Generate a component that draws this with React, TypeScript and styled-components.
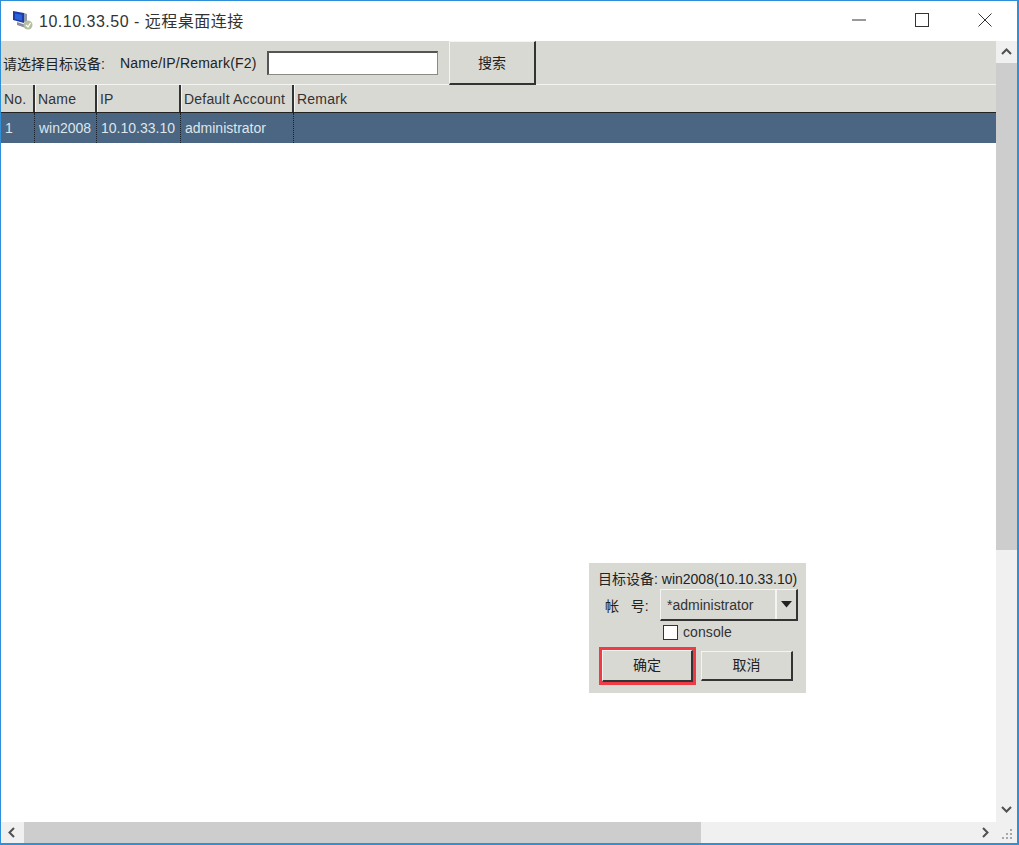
import React from 'react'
import styled, { createGlobalStyle } from 'styled-components'

const GlobalStyle = createGlobalStyle`
  html, body {
    margin: 0;
    padding: 0;
    background: #fff;
  }
  * {
    box-sizing: border-box;
  }
`

const FONT = `"Liberation Sans", "Noto Sans CJK SC", sans-serif`
const PANEL = '#d9d9d4'
const COLUMNS = '34px 62px 84px 113px 1fr'

const Window = styled.div`
  position: relative;
  width: 1019px;
  height: 845px;
  display: flex;
  flex-direction: column;
  border: solid #2f8fd8;
  border-width: 1px 2px 2px 1px;
  background: #fff;
  font-family: ${FONT};
  color: #222;
  overflow: hidden;
`

const TitleBar = styled.div`
  height: 40px;
  flex: none;
  display: flex;
  align-items: center;
  padding: 0 1px 2px 11px;
  background: #fff;
`

const AppIcon = styled.svg`
  width: 22px;
  height: 22px;
  flex: none;
`

const Title = styled.div`
  margin-left: 5px;
  font-size: 16px;
  letter-spacing: 0.5px;
  color: #333;
  white-space: nowrap;
`

const WindowButtons = styled.div`
  margin-left: auto;
  display: flex;
  align-items: center;
`

const WindowButton = styled.div`
  width: 63px;
  height: 38px;
  display: flex;
  align-items: center;
  justify-content: center;
`

const Middle = styled.div`
  flex: 1;
  min-height: 0;
  display: flex;
`

const Content = styled.div`
  flex: 1;
  min-width: 0;
  display: flex;
  flex-direction: column;
`

const Toolbar = styled.div`
  height: 44px;
  flex: none;
  display: flex;
  align-items: center;
  background: ${PANEL};
  border-bottom: 1px solid #f4f4f2;
  font-size: 14px;
`

const ToolLabel = styled.span`
  margin-left: 2px;
  width: 117px;
  white-space: nowrap;
`

const FilterLabel = styled.span`
  width: 147px;
  white-space: nowrap;
  letter-spacing: 0.2px;
`

const SearchInput = styled.input`
  width: 171px;
  height: 24px;
  padding: 0;
  background: #fff;
  border: 1px solid #8a8a86;
  border-top: 2px solid #555;
  border-left: 2px solid #555;
  outline: none;
`

const SearchButton = styled.button`
  margin-left: 11px;
  width: 87px;
  height: 44px;
  padding: 0;
  background: ${PANEL};
  border: none;
  border-top: 1px solid #f4f4f2;
  border-left: 1px solid #f4f4f2;
  border-right: 2px solid #333;
  border-bottom: 2px solid #333;
  font: 14px ${FONT};
  color: #222;
`

const HeaderRow = styled.div`
  height: 28px;
  flex: none;
  display: grid;
  grid-template-columns: ${COLUMNS};
  background: ${PANEL};
  border-bottom: 1px solid #222;
  font-size: 14px;
  letter-spacing: 0.2px;
  color: #333;
`

const HeaderCell = styled.div`
  display: flex;
  align-items: center;
  padding-left: 2px;
  white-space: nowrap;
  overflow: hidden;
  border-right: 2px solid #333;
  border-left: 1px solid #f4f4f2;

  &:first-child {
    border-left: none;
    padding-left: 3px;
  }
  &:last-child {
    border-right: none;
  }
`

const DataRow = styled.div`
  height: 30px;
  flex: none;
  display: grid;
  grid-template-columns: ${COLUMNS};
  background: #4a6682;
  font-size: 14px;
  color: #dfe5ea;
`

const DataCell = styled.div`
  display: flex;
  align-items: center;
  padding-left: 4px;
  white-space: nowrap;
  overflow: hidden;
  border-right: 1px dotted #16202c;

  &:last-child {
    border-right: none;
  }
`

const TableBody = styled.div`
  flex: 1;
  background: #fff;
`

const VerticalBar = styled.div`
  width: 21px;
  flex: none;
  display: flex;
  flex-direction: column;
  padding-bottom: 2px;
  background: #f0f0f0;
`

const ArrowBox = styled.div`
  flex: none;
  width: 21px;
  height: 21px;
  display: flex;
  align-items: center;
  justify-content: center;
  background: #f0f0f0;
`

const VerticalThumb = styled.div`
  width: 21px;
  height: 487px;
  flex: none;
  margin-top: 1px;
  background: #cdcdcd;
`

const Spacer = styled.div`
  flex: 1;
`

const BottomRow = styled.div`
  height: 21px;
  flex: none;
  display: flex;
  background: #f0f0f0;
`

const HorizontalThumb = styled.div`
  width: 677px;
  flex: none;
  margin-left: 2px;
  background: #cdcdcd;
`

const Grip = styled.svg`
  width: 21px;
  height: 21px;
  flex: none;
`

const Dialog = styled.div`
  position: absolute;
  left: 588px;
  top: 562px;
  width: 217px;
  height: 130px;
  display: flex;
  flex-direction: column;
  background: ${PANEL};
  font-size: 14px;
  color: #222;
`

const TargetLine = styled.div`
  margin: 8px 0 1px 9px;
  height: 16px;
  line-height: 16px;
  white-space: nowrap;
`

const AccountRow = styled.div`
  margin-top: 1px;
  display: flex;
  align-items: center;
`

const AccountLabel = styled.span`
  width: 71px;
  padding-left: 16px;
  white-space: pre;
`

const Combo = styled.div`
  width: 138px;
  height: 32px;
  display: flex;
  align-items: center;
  border-top: 1px solid #f4f4f2;
  border-left: 1px solid #f4f4f2;
  border-right: 2px solid #333;
  border-bottom: 2px solid #333;
`

const ComboValue = styled.span`
  flex: 1;
  padding-left: 6px;
  color: #333;
`

const ComboArrow = styled.div`
  width: 21px;
  height: 100%;
  display: flex;
  align-items: center;
  justify-content: center;
  border-left: 2px solid #f4f4f2;
`

const CheckRow = styled.label`
  margin: 3px 0 0 74px;
  display: flex;
  align-items: center;
  gap: 5px;
  height: 16px;
  letter-spacing: 0.1px;
  color: #333;
`

const CheckBox = styled.span`
  width: 15px;
  height: 15px;
  background: #fff;
  border: 1px solid #333;
`

const DialogActions = styled.div`
  margin: 10px 0 0 13px;
  display: flex;
  align-items: center;
  gap: 8px;
`

const DialogButton = styled.button<{ $focused?: boolean }>`
  width: ${(p) => (p.$focused ? '91px' : '92px')};
  height: ${(p) => (p.$focused ? '32px' : '30px')};
  padding: 0 0 3px;
  background: ${PANEL};
  border-top: 1px solid #f4f4f2;
  border-left: 1px solid #f4f4f2;
  border-right: 2px solid #333;
  border-bottom: 2px solid #333;
  font: 14px ${FONT};
  color: #222;
  outline: ${(p) => (p.$focused ? '3px solid #ef3b45' : 'none')};
`

const Chevron = ({ d }: { d: string }) => (
  <svg width="11" height="11" viewBox="0 0 11 11">
    <path d={d} fill="none" stroke="#505050" strokeWidth="2" />
  </svg>
)

const columns = ['No.', 'Name', 'IP', 'Default Account', 'Remark']
const row = ['1', 'win2008', '10.10.33.10', 'administrator', '']

const App = () => (
  <>
    <GlobalStyle />
    <Window>
      <TitleBar>
        <AppIcon viewBox="0 0 22 22">
          <path d="M1 2l11 2v10L1 11z" fill="#1c3aa8" />
          <path d="M3 4.5l7 1.3v6L3 10z" fill="#2a62dc" />
          <path d="M12 4l3 1v9l-3-1z" fill="#8f9ab0" />
          <path d="M5 13l9 3v3l-9-3z" fill="#858d9e" />
          <circle cx="16" cy="16" r="4.5" fill="#b4bea0" />
          <path d="M14 16l2 2 2.5-4" fill="none" stroke="#fff" strokeWidth="1.4" />
        </AppIcon>
        <Title>10.10.33.50 - 远程桌面连接</Title>
        <WindowButtons>
          <WindowButton>
            <svg width="14" height="14" viewBox="0 0 14 14">
              <path d="M0 7h14" stroke="#777" strokeWidth="1.5" />
            </svg>
          </WindowButton>
          <WindowButton>
            <svg width="14" height="14" viewBox="0 0 14 14">
              <rect x="0.5" y="0.5" width="13" height="13" fill="none" stroke="#333" />
            </svg>
          </WindowButton>
          <WindowButton>
            <svg width="14" height="14" viewBox="0 0 14 14">
              <path d="M0.5 0.5l13 13M13.5 0.5l-13 13" stroke="#333" />
            </svg>
          </WindowButton>
        </WindowButtons>
      </TitleBar>
      <Middle>
        <Content>
          <Toolbar>
            <ToolLabel>请选择目标设备:</ToolLabel>
            <FilterLabel>Name/IP/Remark(F2)</FilterLabel>
            <SearchInput />
            <SearchButton>搜索</SearchButton>
          </Toolbar>
          <HeaderRow>
            {columns.map((c) => (
              <HeaderCell key={c}>{c}</HeaderCell>
            ))}
          </HeaderRow>
          <DataRow>
            {row.map((c, i) => (
              <DataCell key={i}>{c}</DataCell>
            ))}
          </DataRow>
          <TableBody />
        </Content>
        <VerticalBar>
          <ArrowBox>
            <Chevron d="M1 8l4.5-4.5L10 8" />
          </ArrowBox>
          <VerticalThumb />
          <Spacer />
          <ArrowBox>
            <Chevron d="M1 3l4.5 4.5L10 3" />
          </ArrowBox>
        </VerticalBar>
      </Middle>
      <BottomRow>
        <ArrowBox>
          <Chevron d="M8 1L3.5 5.5 8 10" />
        </ArrowBox>
        <HorizontalThumb />
        <Spacer />
        <ArrowBox>
          <Chevron d="M3 1l4.5 4.5L3 10" />
        </ArrowBox>
        <Grip viewBox="0 0 21 21">
          <g fill="#a8a8a8">
            <rect x="14" y="7" width="2" height="2" />
            <rect x="10" y="11" width="2" height="2" />
            <rect x="14" y="11" width="2" height="2" />
            <rect x="6" y="15" width="2" height="2" />
            <rect x="10" y="15" width="2" height="2" />
            <rect x="14" y="15" width="2" height="2" />
          </g>
        </Grip>
      </BottomRow>
      <Dialog>
        <TargetLine>目标设备: win2008(10.10.33.10)</TargetLine>
        <AccountRow>
          <AccountLabel>帐   号:</AccountLabel>
          <Combo>
            <ComboValue>*administrator</ComboValue>
            <ComboArrow>
              <svg width="11" height="7" viewBox="0 0 11 7">
                <path d="M0 0h11L5.5 6.5z" fill="#222" />
              </svg>
            </ComboArrow>
          </Combo>
        </AccountRow>
        <CheckRow>
          <CheckBox />
          console
        </CheckRow>
        <DialogActions>
          <DialogButton $focused>确定</DialogButton>
          <DialogButton>取消</DialogButton>
        </DialogActions>
      </Dialog>
    </Window>
  </>
)

export default App
